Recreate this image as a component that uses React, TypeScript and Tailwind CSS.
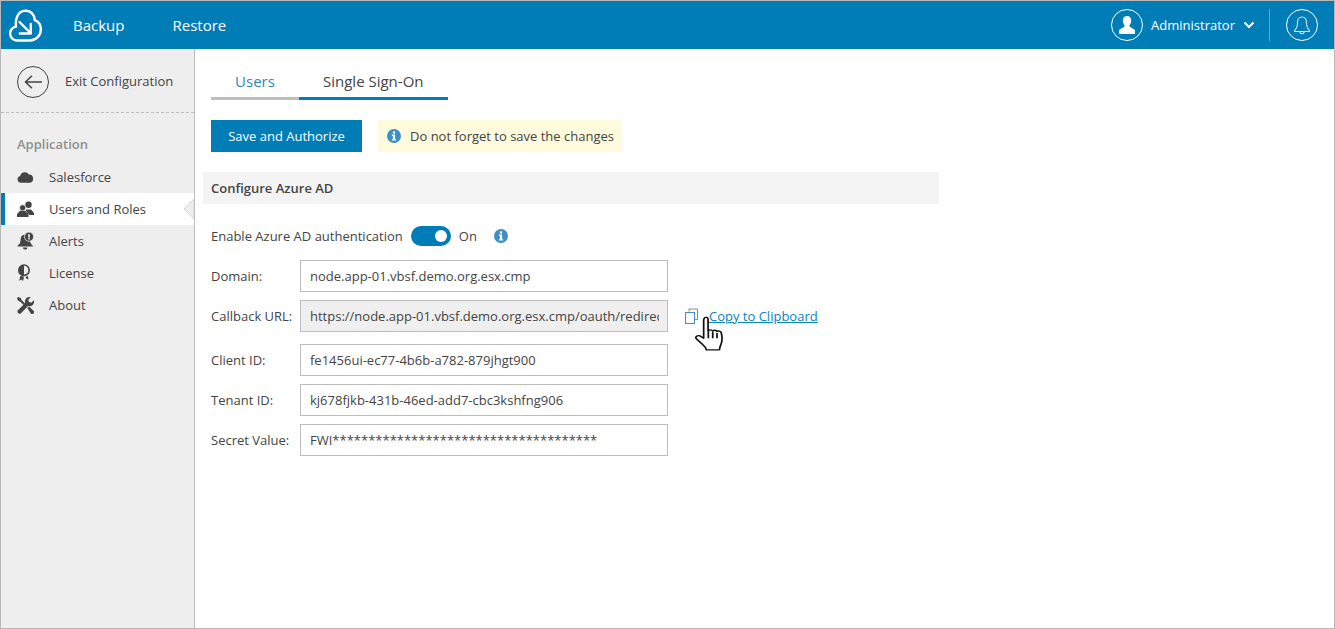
import { ReactNode } from "react";

const InfoIcon = ({ className }: { className: string }) => (
  <svg viewBox="0 0 14 14" className={className}>
    <circle cx="7" cy="7" r="7" fill="#3f8fc4" />
    <rect x="5.9" y="2.4" width="2.2" height="2.1" fill="#fff" />
    <path d="M4.9 5.6h3.2v4.6h1v1.3H4.9v-1.3h1V6.9h-1z" fill="#fff" />
  </svg>
);

const CloudIcon = () => (
  <svg viewBox="0 0 18 12" className="h-[12px] w-[17px]" fill="#444">
    <path d="M4.2 12A3.6 3.6 0 0 1 3.4 4.9 5 5 0 0 1 12.6 3.4 4.4 4.4 0 0 1 14 12z" />
  </svg>
);

const UsersIcon = () => (
  <svg viewBox="0 0 17 16" className="h-[16px] w-[17px]" fill="#444">
    <circle cx="11.5" cy="3.8" r="3.2" />
    <path d="M9 8.5h5l3 3.5v2h-4.5L9 10z" />
    <circle cx="5.6" cy="6.8" r="3" stroke="#eee" strokeWidth="0.6" />
    <path d="M0 16v-3l3-3.2h5.2L11.5 13v3z" />
  </svg>
);

const AlertIcon = () => (
  <svg viewBox="0 0 17 18" className="h-[18px] w-[17px]">
    <path d="M8 2.4C5 2.4 3.6 4.6 3.6 7.4c0 3-1 4.6-3 6.2v1h15.200v-1c-1.500-1.200-2.400-2.500-2.700-4.400z" fill="#444" />
    <path d="M6 15.400h4.400a2.200 2.200 0 0 1-4.400 0z" fill="#444" />
    <circle cx="12" cy="4.700" r="4.600" fill="#444" stroke="#eee" strokeWidth="0.8" />
    <rect x="11.200" y="2.200" width="1.700" height="3.300" fill="#eee" />
    <rect x="11.200" y="6" width="1.700" height="1.400" fill="#eee" />
  </svg>
);

const LicenseIcon = () => (
  <svg viewBox="0 0 14 18" className="h-[18px] w-[14px]">
    <circle cx="7" cy="6.200" r="5.200" fill="none" stroke="#444" strokeWidth="1.600" />
    <path d="M7 1a5.200 5.200 0 0 0 0 10.400z" fill="#444" />
    <path d="M3.400 11.800 2.200 16.800l2.600-1.200 1.200 1.600 1-4.400zM10.600 11.800l1 3.400-2.200-.4-.8-1.800z" fill="#444" />
  </svg>
);

const ToolsIcon = () => (
  <svg viewBox="0 0 17 17" className="h-[17px] w-[17px]" fill="#444">
    <path d="M1.200 0 0 1.200l1 2.600 2 .6 3.600 3.600 1.500-1.500L4.500 2.900 3.800 1z" />
    <path d="M16.800 3.300 14.200 5.800 12 5l-.7-2.200L13.800.3a4.400 4.400 0 0 0-5.600 5.600L.7 13.400a2.200 2.200 0 0 0 3 3l7.400-7.500a4.400 4.400 0 0 0 5.700-5.600z" />
    <path d="m10.400 11 1.700-1.600 4.400 4.400a1.900 1.900 0 0 1-2.700 2.700z" />
  </svg>
);

const menu: { label: string; icon: ReactNode; active?: boolean }[] = [
  { label: "Salesforce", icon: <CloudIcon /> },
  { label: "Users and Roles", icon: <UsersIcon />, active: true },
  { label: "Alerts", icon: <AlertIcon /> },
  { label: "License", icon: <LicenseIcon /> },
  { label: "About", icon: <ToolsIcon /> },
];

const Field = ({
  label,
  value,
  disabled,
  className,
}: {
  label: string;
  value: string;
  disabled?: boolean;
  className?: string;
}) => (
  <div className={`flex items-center ${className ?? ""}`}>
    <span className="w-[89px] shrink-0 pt-[2px]">{label}</span>
    <div
      className={`flex h-[32px] w-[368px] items-center overflow-hidden border border-[#bdbdbd] pl-[9px] pr-[8px] whitespace-nowrap ${
        disabled ? "bg-[#efefef]" : "bg-white"
      }`}
    >
      <span className="block w-full overflow-hidden pt-[2px]">{value}</span>
    </div>
  </div>
);

export default function App() {
  return (
    <div className="flex h-[629px] w-[1335px] flex-col overflow-hidden border border-[#b8b8b8] bg-white font-['Open_Sans',sans-serif] text-[13px] text-[#444]">
      <header className="flex h-[48px] shrink-0 items-center bg-[#007cb7] text-white">
        <svg viewBox="0 0 33 33" className="ml-[8px] h-[33px] w-[33px]" fill="none" stroke="#fff" strokeWidth="2.400" strokeLinecap="round" strokeLinejoin="round">
          <path d="M10 31.500H8.500A7 7 0 0 1 7 17.600C6.200 12 7.500 2 16.500 1.800c5.500-.1 9 4 9.300 9.300 3.800 1.400 6 4.800 6 9.300 0 6-4.500 11-11 11.100H9" />
          <path d="M10.500 13 21.500 24M21.800 15v9.500H10.800" />
        </svg>
        <nav className="ml-[31px] flex gap-[48px] text-[15px]">
          <span>Backup</span>
          <span>Restore</span>
        </nav>
        <div className="ml-auto flex items-center">
          <div className="flex h-[32px] w-[32px] items-center justify-center rounded-full border border-white">
            <svg viewBox="0 0 16 18" className="h-[18px] w-[16px]" fill="#fff">
              <path d="M8 0c2.700 0 4.200 2 4.200 4.600 0 2-.8 3.500-1.700 4.600v1.300L16 14v4H0v-4l5.500-3.500V9.200C4.600 8.100 3.800 6.600 3.800 4.600 3.800 2 5.300 0 8 0z" />
            </svg>
          </div>
          <span className="ml-[8px] pt-[2px]">Administrator</span>
          <svg viewBox="0 0 12 8" className="ml-[8px] h-[8px] w-[12px]" fill="none" stroke="#fff" strokeWidth="2">
            <path d="m1.500 1.500 4.500 4.500 4.500-4.500" />
          </svg>
          <div className="ml-[14px] h-[32px] w-px bg-[#5aa9d2]" />
          <div className="ml-[16px] mr-[16px] flex h-[32px] w-[32px] items-center justify-center rounded-full border border-white">
            <svg viewBox="0 0 16 19" className="h-[19px] w-[16px]" fill="none" stroke="#cfe5f1" strokeWidth="1.100">
              <path d="M8 1c-3 0-4.500 2.500-4.500 5.500 0 3.500-.8 6-2.900 8v1h14.800v-1c-2.100-2-2.900-4.500-2.900-8C12.500 3.500 11 1 8 1zM5.800 15.500a2.200 2.200 0 0 0 4.400 0" />
            </svg>
          </div>
        </div>
      </header>

      <div className="flex min-h-0 flex-1">
        <aside className="w-[194px] shrink-0 border-r border-[#bdbdbd] bg-[#eeeeee]">
          <div className="flex h-[64px] items-center border-b border-dashed border-[#bdbdbd] pl-[16px] pt-[2px]">
            <div className="flex h-[32px] w-[32px] items-center justify-center rounded-full border border-[#444]">
              <svg viewBox="0 0 18 14" className="h-[14px] w-[18px]" fill="none" stroke="#444" strokeWidth="1.500">
                <path d="M18 7H1.500M8 .8 1.500 7 8 13.200" />
              </svg>
            </div>
            <span className="ml-[16px]">Exit Configuration</span>
          </div>
          <div className="mt-[22px] pl-[16px] font-semibold leading-[18px] text-[#8f8f8f]">Application</div>
          <ul className="mt-[8px]">
            {menu.map((item) => (
              <li
                key={item.label}
                className={`relative flex h-[32px] items-center ${
                  item.active ? "border-l-4 border-[#007cb7] bg-white pl-[12px]" : "pl-[16px]"
                }`}
              >
                <span className="flex w-[32px] shrink-0 items-center">{item.icon}</span>
                <span className="pt-[2px]">{item.label}</span>
                {item.active && (
                  <svg viewBox="0 0 10 20" className="absolute right-0 top-[6px] h-[20px] w-[10px]">
                    <path d="M10 0 0 10l10 10z" fill="#eeeeee" stroke="#d6d6d6" strokeWidth="1" />
                  </svg>
                )}
              </li>
            ))}
          </ul>
        </aside>

        <main className="min-w-0 flex-1 pl-[8px]">
          <div className="ml-[8px] mt-[19px] flex text-[15px] leading-[27px]">
            <div className="h-[32px] w-[88px] border-b-[3px] border-[#bdbdbd] text-center text-[#2f86b8]">Users</div>
            <div className="h-[32px] w-[149px] border-b-[3px] border-[#007cb7] pl-[24px]">Single Sign-On</div>
          </div>
          <div className="ml-[8px] mt-[20px] flex">
            <button className="h-[32px] w-[151px] bg-[#007cb7] pt-[2px] text-white">Save and Authorize</button>
            <div className="ml-[16px] flex h-[32px] w-[244px] items-center bg-[#fffbdc] pl-[9px]">
              <InfoIcon className="h-[14px] w-[14px]" />
              <span className="ml-[9px] pt-[2px]">Do not forget to save the changes</span>
            </div>
          </div>
          <div className="mt-[20px] flex h-[32px] w-[736px] items-center bg-[#f4f4f4] pl-[8px] pt-[2px] font-semibold">Configure Azure AD</div>
          <div className="ml-[8px] mt-[22px] flex h-[20px] items-center">
            <span className="pt-[2px]">Enable Azure AD authentication</span>
            <div className="ml-[8px] flex h-[20px] w-[40px] items-center justify-end rounded-full bg-[#007cb7] pr-[4px]">
              <div className="h-[12px] w-[12px] rounded-full bg-white" />
            </div>
            <span className="ml-[8px] pt-[2px]">On</span>
            <InfoIcon className="ml-[17px] h-[14px] w-[14px]" />
          </div>
          <div className="ml-[8px] mt-[14px] flex flex-col">
            <Field label="Domain:" value="node.app-01.vbsf.demo.org.esx.cmp" />
            <div className="relative mt-[8px]">
              <Field label="Callback URL:" value="https://node.app-01.vbsf.demo.org.esx.cmp/oauth/redirect" disabled />
              <div className="absolute left-[474px] top-[8px] flex items-center">
                <svg viewBox="0 0 14 16" className="h-[16px] w-[14px]" fill="none">
                  <path d="M4 3.500V1h8.500v10.500H10" stroke="#888" strokeWidth="1" />
                  <path d="M.5 4.500h9v11h-9z" stroke="#3f8fc4" strokeWidth="1.100" fill="#fff" />
                </svg>
                <span className="ml-[10px] leading-[16px] text-[#0a84bd] underline">Copy to Clipboard</span>
              </div>
              <svg viewBox="0 0 21 35" preserveAspectRatio="none" className="absolute left-[484px] top-[16px] h-[37px] w-[28px]" fill="#fff" stroke="#111" strokeWidth="1.300" strokeLinejoin="round">
                <path d="M7 2c1-1.300 2.800-.7 2.800 1v11c.8-1.200 2.800-1.200 3.400.2.800-1.100 2.800-1 3.300.4 1-.7 2.900-.4 3.200 1.300.7 3.300.7 8-.3 11-.6 1.800-1 3-1 5.100H8.500c-.3-2.200-1.300-3.400-2.800-5L1 21.500c-1-1.500.6-3.700 2.700-2.700L6.500 21V3.500z" />
                <path d="M10 14v7M13.300 15v6M16.500 16v5" fill="none" />
              </svg>
            </div>
            <Field className="mt-[12px]" label="Client ID:" value="fe1456ui-ec77-4b6b-a782-879jhgt900" />
            <Field className="mt-[8px]" label="Tenant ID:" value="kj678fjkb-431b-46ed-add7-cbc3kshfng906" />
            <Field className="mt-[8px]" label="Secret Value:" value="FWI*************************************" />
          </div>
        </main>
      </div>
    </div>
  );
}
